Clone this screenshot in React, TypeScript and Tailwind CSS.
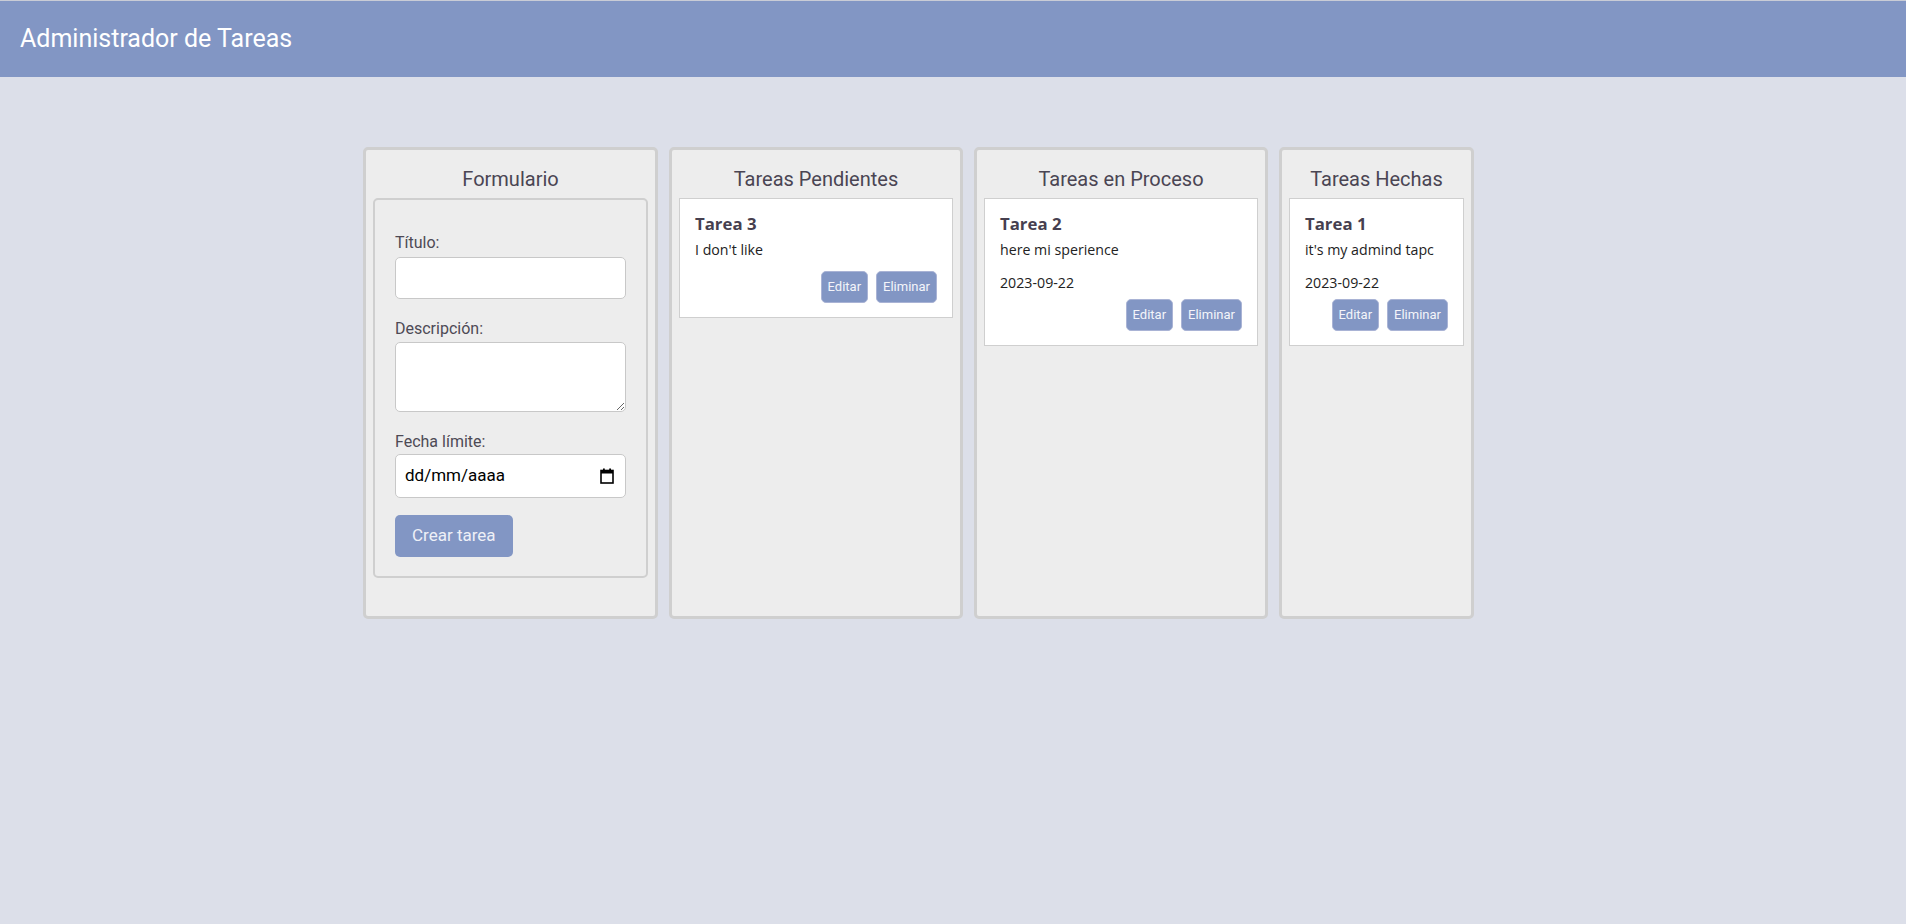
import React from "react";

type Task = {
  title: string;
  description: string;
  date?: string;
};

const roboto = { fontFamily: "Roboto, 'Liberation Sans', sans-serif" };
const openSans = { fontFamily: "'Open Sans', 'Noto Sans', sans-serif" };

const CalendarIcon: React.FC = () => (
  <svg width="14" height="16" viewBox="0 0 14 16" fill="none">
    <rect x="1" y="2.5" width="12" height="12.5" stroke="#000" strokeWidth="1.6" />
    <rect x="1" y="2.5" width="12" height="3" fill="#000" />
    <rect x="3" y="0.5" width="1.8" height="3" fill="#000" />
    <rect x="9.2" y="0.5" width="1.8" height="3" fill="#000" />
  </svg>
);

const TaskCard: React.FC<{ task: Task }> = ({ task }) => {
  return (
    <div className="bg-white border border-[#cfcfcf] px-[15px] pt-[16px] pb-[14px]">
      <h3 className="text-[16.8px] leading-[18px] font-bold text-[#463f4f]" style={openSans}>
        {task.title}
      </h3>
      <p className="mt-[7px] text-[14.2px] leading-[20px] text-[#222]" style={openSans}>
        {task.description}
      </p>
      {task.date && (
        <p className="mt-[13px] text-[14.2px] leading-[20px] text-[#222]" style={openSans}>
          {task.date}
        </p>
      )}
      <div className={`flex justify-end gap-[8px] ${task.date ? "mt-[6px]" : "mt-[11px]"}`}>
        <button
          className="h-[32px] px-[6px] rounded-[5px] border border-[#a9b3d5] bg-[#8296c4] text-[13px] text-[#f4f5fa]"
          style={roboto}
        >
          Editar
        </button>
        <button
          className="h-[32px] px-[6px] rounded-[5px] border border-[#a9b3d5] bg-[#8296c4] text-[13px] text-[#f4f5fa]"
          style={roboto}
        >
          Eliminar
        </button>
      </div>
    </div>
  );
};

const Column: React.FC<{ title: string; width: string; children?: React.ReactNode }> = ({
  title,
  width,
  children,
}) => (
  <section
    className={`${width} h-[472px] shrink-0 rounded-[5px] border-[3px] border-[#cfcfcf] bg-[#ededed] px-[7px] pt-[18px]`}
  >
    <h2 className="text-center text-[20px] leading-[23px] text-[#4a4553]" style={roboto}>
      {title}
    </h2>
    <div className="mt-[7px] flex flex-col gap-[8px]">{children}</div>
  </section>
);

const Label: React.FC<{ text: string; className?: string }> = ({ text, className }) => (
  <label className={`block text-[16px] leading-[19px] text-[#4d4a55] ${className ?? ""}`} style={roboto}>
    {text}
  </label>
);

const App: React.FC = () => {
  const pending: Task[] = [{ title: "Tarea 3", description: "I don't like" }];
  const inProgress: Task[] = [{ title: "Tarea 2", description: "here mi sperience", date: "2023-09-22" }];
  const done: Task[] = [{ title: "Tarea 1", description: "it's my admind tapc", date: "2023-09-22" }];

  return (
    <div className="min-h-screen bg-[#dcdfe9]">
      <header className="h-[77px] border-t border-[#c9ccd6] bg-[#8296c4] flex items-center px-[20px]">
        <h1 className="text-[25px] text-white" style={roboto}>
          Administrador de Tareas
        </h1>
      </header>

      <main className="flex gap-[11px] pl-[363px] pt-[70px]">
        <Column title="Formulario" width="w-[295px]">
          <form className="rounded-[5px] border-2 border-[#cfcfcf] px-[20px] pt-[33px] pb-[19px]">
            <Label text="Título:" className="mb-[5px]" />
            <input className="block w-full h-[42px] rounded-[5px] border border-[#c8c8c8] bg-white" />
            <Label text="Descripción:" className="mt-[20px] mb-[4px]" />
            <textarea className="block w-full h-[70px] rounded-[5px] border border-[#c8c8c8] bg-white" />
            <Label text="Fecha límite:" className="mt-[20px] mb-[3px]" />
            <div className="flex h-[44px] items-center justify-between rounded-[5px] border border-[#c8c8c8] bg-white pl-[9px] pr-[11px]">
              <span className="text-[17px] text-black" style={roboto}>
                dd/mm/aaaa
              </span>
              <CalendarIcon />
            </div>
            <button
              type="button"
              className="mt-[17px] h-[42px] px-[17px] rounded-[5px] bg-[#8296c4] text-[17px] text-[#eef0f7]"
              style={roboto}
            >
              Crear tarea
            </button>
          </form>
        </Column>

        <Column title="Tareas Pendientes" width="w-[294px]">
          {pending.map((t) => (
            <TaskCard key={t.title} task={t} />
          ))}
        </Column>

        <Column title="Tareas en Proceso" width="w-[294px]">
          {inProgress.map((t) => (
            <TaskCard key={t.title} task={t} />
          ))}
        </Column>

        <Column title="Tareas Hechas" width="w-[195px]">
          {done.map((t) => (
            <TaskCard key={t.title} task={t} />
          ))}
        </Column>
      </main>
    </div>
  );
};

export default App;
